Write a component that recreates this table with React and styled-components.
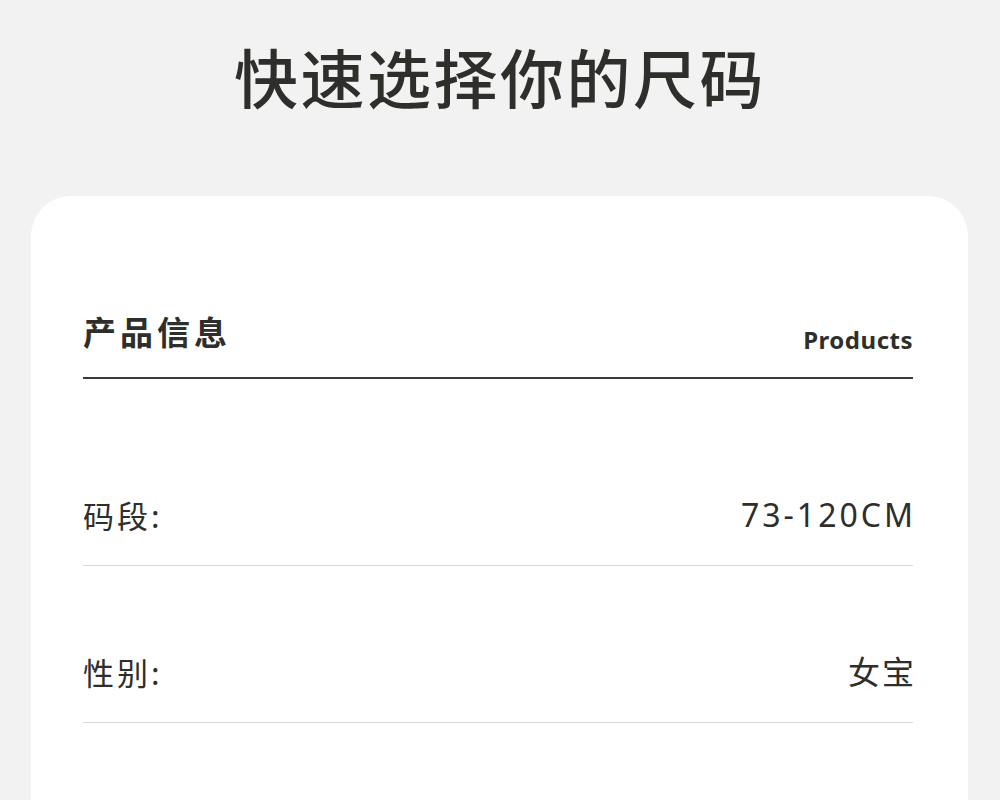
import React from "react";
import styled, { createGlobalStyle } from "styled-components";

const GlobalStyle = createGlobalStyle`
  html, body {
    margin: 0;
    padding: 0;
    background: #f2f2f2;
    font-family: "Noto Sans", "Noto Sans CJK SC", sans-serif;
    color: #2e2e2b;
  }
`;

const Page = styled.div`
  width: 1000px;
  height: 800px;
  overflow: hidden;
  display: flex;
  flex-direction: column;
  align-items: flex-start;
`;

const Title = styled.h1`
  flex-shrink: 0;
  margin: 0;
  width: 100%;
  height: 196px;
  padding-top: 33px;
  box-sizing: border-box;
  text-align: center;
  font-family: "Noto Sans CJK SC", sans-serif;
  font-size: 64px;
  font-weight: 500;
  letter-spacing: 2.5px;
  line-height: 84px;
  color: #2e2e2b;
`;

const Card = styled.section`
  flex-shrink: 0;
  margin-left: 31px;
  width: 937px;
  box-sizing: border-box;
  padding: 113px 55px 120px 52px;
  background: #ffffff;
  border-radius: 40px;
`;

const Header = styled.div`
  display: flex;
  justify-content: space-between;
  align-items: flex-end;
  padding-bottom: 24px;
  border-bottom: 2px solid #3a3a38;
`;

const HeaderTitle = styled.h2`
  margin: 0;
  font-family: "Noto Sans CJK SC", sans-serif;
  font-size: 33px;
  font-weight: 700;
  letter-spacing: 4px;
  line-height: 44px;
`;

const HeaderSub = styled.span`
  font-family: "Noto Sans", sans-serif;
  font-size: 24px;
  font-weight: 700;
  letter-spacing: 0.5px;
  line-height: 30px;
  margin-bottom: -2px;
`;

const List = styled.div`
  padding-top: 30px;
`;

const Row = styled.div`
  display: flex;
  justify-content: space-between;
  align-items: flex-end;
  height: 157px;
  box-sizing: border-box;
  padding-bottom: 30px;
  border-bottom: 1px solid #d9d9d9;
`;

const Label = styled.span`
  font-family: "Noto Sans CJK SC", sans-serif;
  font-size: 31px;
  font-weight: 400;
  letter-spacing: 3px;
  line-height: 40px;
`;

const Value = styled.span`
  font-family: "Noto Sans", "Noto Sans CJK SC", sans-serif;
  font-size: 32px;
  font-weight: 400;
  letter-spacing: ${(p) => (p.$wide ? "3px" : "2px")};
  line-height: 40px;
  margin-right: -3px;
`;

const rows = [
  { label: "码段:", value: "73-120CM", wide: true },
  { label: "性别:", value: "女宝" },
];

export default function App() {
  return (
    <Page>
      <GlobalStyle />
      <Title>快速选择你的尺码</Title>
      <Card>
        <Header>
          <HeaderTitle>产品信息</HeaderTitle>
          <HeaderSub>Products</HeaderSub>
        </Header>
        <List>
          {rows.map((r) => (
            <Row key={r.label}>
              <Label>{r.label}</Label>
              <Value $wide={r.wide}>{r.value}</Value>
            </Row>
          ))}
        </List>
      </Card>
    </Page>
  );
}
